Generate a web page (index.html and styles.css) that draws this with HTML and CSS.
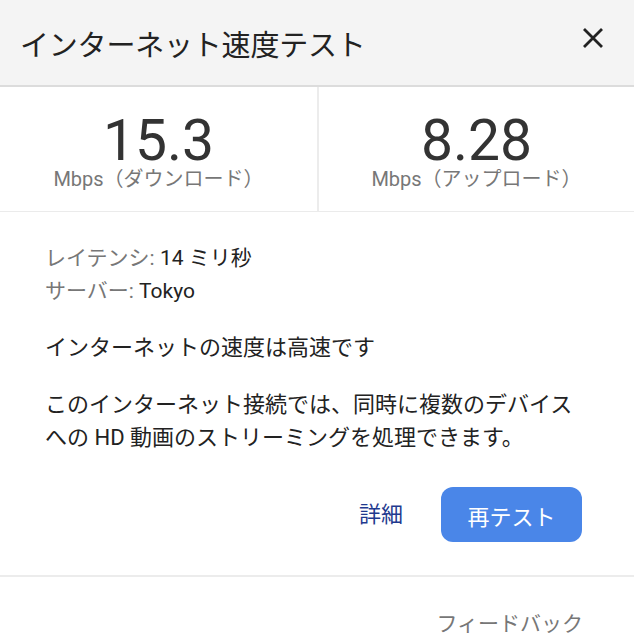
FILE: index.html
```html
<!DOCTYPE html>
<html lang="ja">
<head>
    <meta charset="UTF-8">
    <meta name="viewport" content="width=device-width, initial-scale=1.0">
    <title>インターネット速度テスト</title>
    <link rel="stylesheet" href="styles.css">
</head>
<body>
    <div class="header">
        <h1>インターネット速度テスト</h1>
        <button class="close" aria-label="閉じる">
            <svg width="22" height="22" viewBox="0 0 22 22">
                <path d="M2 2 L20 20 M20 2 L2 20" stroke="#222" stroke-width="2.8" fill="none"/>
            </svg>
        </button>
    </div>

    <div class="stats">
        <div class="stat">
            <div class="value">15.3</div>
            <div class="unit">Mbps（ダウンロード）</div>
        </div>
        <div class="stat">
            <div class="value">8.28</div>
            <div class="unit">Mbps（アップロード）</div>
        </div>
    </div>

    <div class="details">
        <div class="info">
            <div><span class="label">レイテンシ:</span> 14 ミリ秒</div>
            <div><span class="label">サーバー:</span> Tokyo</div>
        </div>
        <p class="summary">インターネットの速度は高速です</p>
        <p class="summary desc">このインターネット接続では、同時に複数のデバイスへの HD 動画のストリーミングを処理できます。</p>

        <div class="actions">
            <a href="#" class="more">詳細</a>
            <button class="retest">再テスト</button>
        </div>
    </div>

    <div class="footer">
        <a href="#" class="feedback">フィードバック</a>
    </div>
</body>
</html>
```

FILE: styles.css
```css
body {
    font-family: Roboto, "Noto Sans CJK JP", sans-serif;
    background-color: #fff;
    color: #222;
    margin: 0;
    padding: 0;
    width: 634px;
    height: 640px;
    overflow: hidden;
}

.header {
    height: 85px;
    background-color: #f4f4f4;
    border-bottom: 2px solid #dcdcdc;
    display: flex;
    align-items: center;
    justify-content: space-between;
    padding: 0 30px 0 20px;
}

.header h1 {
    margin: 0;
    font-size: 29px;
    font-weight: 400;
    color: #222;
    letter-spacing: -0.2px;
}

.close {
    background: none;
    border: none;
    padding: 0;
    margin-top: -9px;
    display: flex;
    cursor: pointer;
}

.stats {
    display: grid;
    grid-template-columns: 1fr 1fr;
    border-bottom: 1px solid #ebebeb;
}

.stat {
    text-align: center;
    padding: 25px 0 22px;
}

.stat + .stat {
    border-left: 2px solid #ececec;
}

.value {
    font-size: 57px;
    line-height: 57px;
    color: #333;
}

.unit {
    font-size: 20px;
    line-height: 20px;
    color: #777;
}

.details {
    padding: 30px 52px 33px 45px;
    font-size: 21px;
    line-height: 33px;
}

.label {
    color: #777;
}

.summary {
    margin: 23px 0 0;
    font-size: 22px;
}

.desc {
    margin-top: 24px;
}

.actions {
    display: flex;
    justify-content: flex-end;
    align-items: center;
    gap: 38px;
    margin-top: 33px;
}

.more {
    color: #1f3a8f;
    text-decoration: none;
    font-size: 22px;
}

.retest {
    width: 141px;
    height: 55px;
    border: none;
    border-radius: 12px;
    background-color: #4a86e8;
    color: #fff;
    font-family: inherit;
    font-size: 22px;
    cursor: pointer;
}

.footer {
    border-top: 2px solid #ececec;
    padding: 30px 51px 0 0;
    text-align: right;
}

.feedback {
    color: #777;
    text-decoration: none;
    font-size: 21px;
}
```
